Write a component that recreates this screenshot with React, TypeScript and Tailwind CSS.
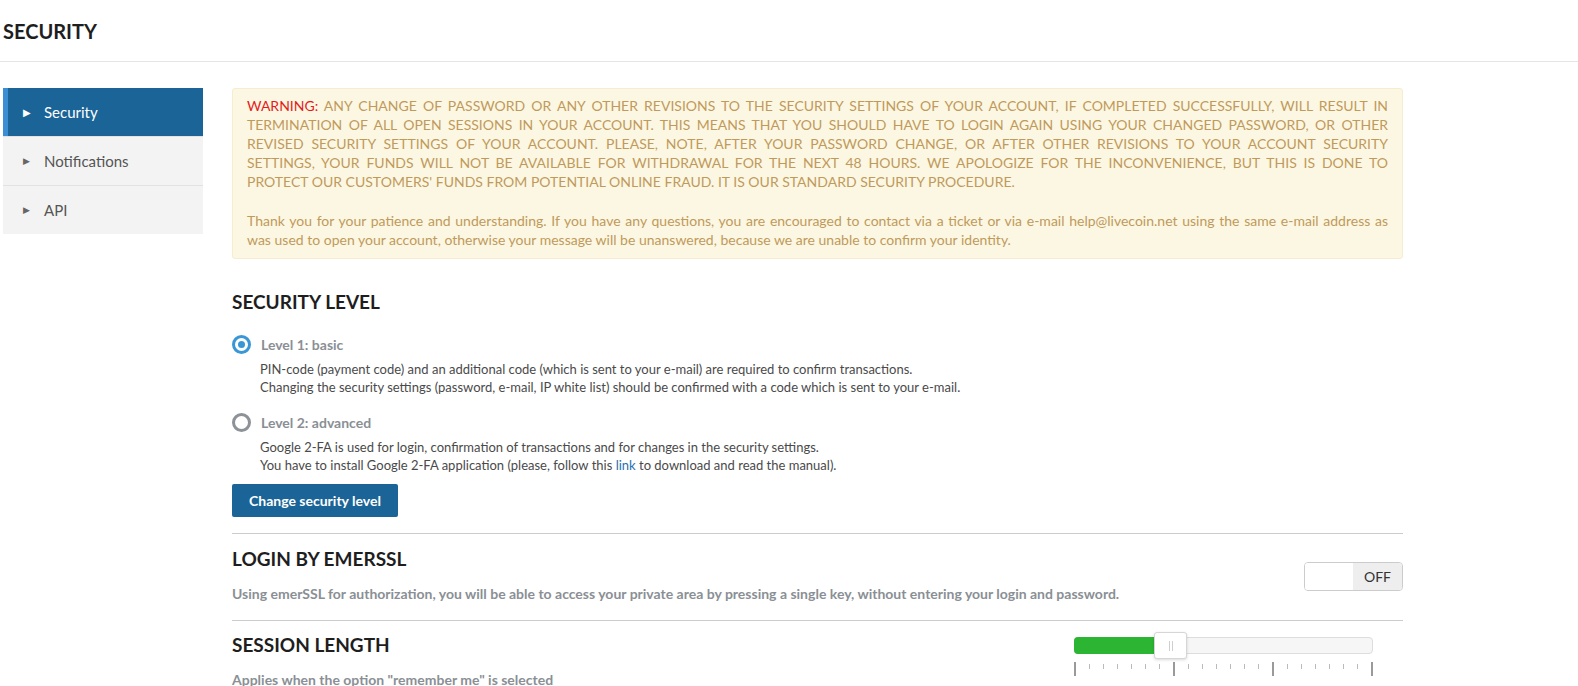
import React from "react";

function Radio({ checked }: { checked: boolean }) {
  return checked ? (
    <div className="w-[19px] h-[19px] rounded-full border-[3px] border-[#3a97d6] flex items-center justify-center shrink-0">
      <div className="w-[7px] h-[7px] rounded-full bg-[#3a97d6]" />
    </div>
  ) : (
    <div className="w-[19px] h-[19px] rounded-full border-[3px] border-[#8d9298] shrink-0" />
  );
}

function SideItem({ label, active }: { label: string; active?: boolean }) {
  return active ? (
    <div className="h-[48px] flex items-center bg-[#1a6497] border-l-[5px] border-[#3b8ed4] text-white">
      <span className="text-[10px] ml-[15px] w-[21px]">▶</span>
      <span className="text-[15px]">{label}</span>
    </div>
  ) : (
    <div className="h-[49px] flex items-center border-t border-[#e2e2e2] text-[#555]">
      <span className="text-[9px] ml-[20px] w-[21px] text-[#666]">▶</span>
      <span className="text-[15px]">{label}</span>
    </div>
  );
}

const warnLines = [
  "ANY CHANGE OF PASSWORD OR ANY OTHER REVISIONS TO THE SECURITY SETTINGS OF YOUR ACCOUNT, IF COMPLETED SUCCESSFULLY, WILL RESULT IN",
  "TERMINATION OF ALL OPEN SESSIONS IN YOUR ACCOUNT. THIS MEANS THAT YOU SHOULD HAVE TO LOGIN AGAIN USING YOUR CHANGED PASSWORD, OR OTHER",
  "REVISED SECURITY SETTINGS OF YOUR ACCOUNT. PLEASE, NOTE, AFTER YOUR PASSWORD CHANGE, OR AFTER OTHER REVISIONS TO YOUR ACCOUNT SECURITY",
  "SETTINGS, YOUR FUNDS WILL NOT BE AVAILABLE FOR WITHDRAWAL FOR THE NEXT 48 HOURS. WE APOLOGIZE FOR THE INCONVENIENCE, BUT THIS IS DONE TO",
];

export default function App() {
  const ticks: boolean[] = [];
  for (let i = 0; i < 22; i++) ticks.push(i % 7 === 0);
  return (
    <div className="w-[1578px] h-[686px] overflow-hidden bg-white" style={{ fontFamily: "Lato, 'Noto Sans', sans-serif" }}>
      <div className="h-[62px] border-b border-[#e5e5e5] flex items-center pl-[3px]">
        <h1 className="text-[20px] font-bold text-[#1e1e1e] leading-none">SECURITY</h1>
      </div>
      <div className="flex pl-[3px] pt-[26px]">
        <div className="w-[200px] shrink-0 bg-[#f3f3f3] self-start">
          <SideItem label="Security" active />
          <SideItem label="Notifications" />
          <SideItem label="API" />
        </div>
        <div className="ml-[29px] w-[1171px] shrink-0">
          <div className="bg-[#fcf7e3] border border-[#f6ecd0] rounded-[3px] px-[14px] pt-[7px] pb-[9px] text-[14px] leading-[19px] text-[#c09a5b]">
            <div className="mb-[20px]">
              {warnLines.map((l, i) => (
                <div key={i} className="text-justify [text-align-last:justify]">
                  {i === 0 && <span className="text-[#e41b1b]">WARNING: </span>}
                  {l}
                </div>
              ))}
              <div>PROTECT OUR CUSTOMERS' FUNDS FROM POTENTIAL ONLINE FRAUD. IT IS OUR STANDARD SECURITY PROCEDURE.</div>
            </div>
            <div>
              <div className="text-justify [text-align-last:justify]">
                Thank you for your patience and understanding. If you have any questions, you are encouraged to contact via a ticket or via e-mail help@livecoin.net using the same e-mail address as
              </div>
              <div>was used to open your account, otherwise your message will be unanswered, because we are unable to confirm your identity.</div>
            </div>
          </div>

          <h2 className="mt-[32px] text-[19px] leading-[22px] font-bold text-[#1e1e1e]">SECURITY LEVEL</h2>
          <div className="mt-[21px] flex items-center h-[20px]">
            <Radio checked />
            <span className="ml-[10px] text-[14px] font-bold text-[#8a8f95]">Level 1: basic</span>
          </div>
          <div className="mt-[6px] ml-[28px] text-[13px] leading-[18px] text-[#4a4a4a]">
            <div>PIN-code (payment code) and an additional code (which is sent to your e-mail) are required to confirm transactions.</div>
            <div>Changing the security settings (password, e-mail, IP white list) should be confirmed with a code which is sent to your e-mail.</div>
          </div>
          <div className="mt-[16px] flex items-center h-[20px]">
            <Radio checked={false} />
            <span className="ml-[10px] text-[14px] font-bold text-[#8a8f95]">Level 2: advanced</span>
          </div>
          <div className="mt-[6px] ml-[28px] text-[13px] leading-[18px] text-[#4a4a4a]">
            <div>Google 2-FA is used for login, confirmation of transactions and for changes in the security settings.</div>
            <div>
              You have to install Google 2-FA application (please, follow this <span className="text-[#2a6fb0]">link</span> to download and read the manual).
            </div>
          </div>
          <button className="mt-[10px] h-[33px] w-[166px] bg-[#1a6497] rounded-[2px] text-white text-[14px] font-bold">
            Change security level
          </button>

          <div className="mt-[16px] border-t border-[#cccccc] pt-[14px] flex justify-between items-start">
            <div>
              <h2 className="text-[19px] leading-[22px] font-bold text-[#1e1e1e]">LOGIN BY EMERSSL</h2>
              <div className="mt-[15px] text-[14px] leading-[18px] font-bold text-[#8a8f95]">
                Using emerSSL for authorization, you will be able to access your private area by pressing a single key, without entering your login and password.
              </div>
            </div>
            <div className="mt-[14px] w-[99px] h-[29px] border border-[#cccccc] rounded-[4px] flex overflow-hidden shrink-0">
              <div className="flex-1 bg-white" />
              <div className="w-[49px] bg-[#eeeeee] flex items-center justify-center text-[14px] text-[#333]">OFF</div>
            </div>
          </div>

          <div className="mt-[17px] border-t border-[#cccccc] pt-[13px] flex justify-between items-start">
            <div>
              <h2 className="text-[19px] leading-[22px] font-bold text-[#1e1e1e]">SESSION LENGTH</h2>
              <div className="mt-[15px] text-[14px] leading-[18px] font-bold text-[#8a8f95]">
                Applies when the option "remember me" is selected
              </div>
            </div>
            <div className="mr-[30px] w-[299px] pt-[3px] shrink-0">
              <div className="relative h-[17px] rounded-[4px] border border-[#dddddd] bg-[#f6f6f6]">
                <div className="absolute left-[-1px] top-[-1px] h-[17px] w-[95px] rounded-l-[4px] bg-[#2cb532]" />
                <div className="absolute left-[79px] top-[-6px] w-[33px] h-[27px] bg-white border border-[#d6d6d6] rounded-[3px] shadow-[0_1px_3px_rgba(0,0,0,0.15)] flex items-center justify-center gap-[2px]">
                  <div className="w-px h-[10px] bg-[#cfcfcf]" />
                  <div className="w-px h-[10px] bg-[#cfcfcf]" />
                </div>
              </div>
              <div className="mt-[8px] flex justify-between items-start">
                {ticks.map((major, i) =>
                  major ? (
                    <div key={i} className="w-[2px] h-[14px] bg-[#9a9a9a]" />
                  ) : (
                    <div key={i} className="w-px h-[5px] mt-[2px] bg-[#bbbbbb]" />
                  )
                )}
              </div>
            </div>
          </div>
        </div>
      </div>
    </div>
  );
}
